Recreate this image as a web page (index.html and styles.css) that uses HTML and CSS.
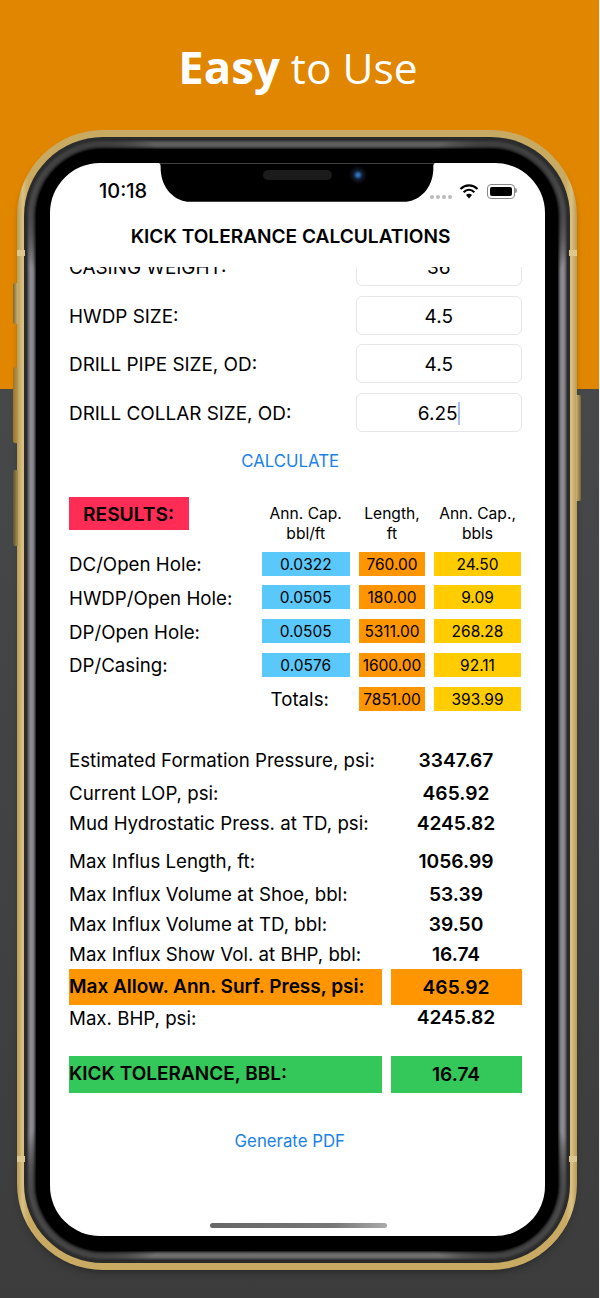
FILE: index.html
```html
<!DOCTYPE html>
<html lang="en">
<head>
<meta charset="UTF-8">
<meta name="viewport" content="width=device-width, initial-scale=1.0">
<title>Easy to Use</title>
<link rel="stylesheet" href="styles.css">
</head>
<body>

<h1 class="headline"><b>Easy</b> to Use</h1>

<div class="phone">
    <span class="side-btn btn-silent"></span>
    <span class="side-btn btn-up"></span>
    <span class="side-btn btn-down"></span>
    <span class="side-btn btn-power"></span>
    <span class="band-mark mark-tl"></span>
    <span class="band-mark mark-tr"></span>
    <span class="band-mark mark-bl"></span>
    <span class="band-mark mark-br"></span>
    <div class="ring-dark">
        <div class="ring-gray">
            <div class="bezel">
                <div class="screen">

                    <svg class="notch" width="278" height="39" viewBox="0 0 280 39">
                        <path d="M0 0H280C276 0 278 4 277 10C275 28 261 39 248 39H32C19 39 5 28 3 10C2 4 4 0 0 0Z" fill="#000"/>
                    </svg>
                    <span class="speaker"></span>
                    <span class="camera"></span>

                    <div class="status-bar">
                        <span class="time">10:18</span>
                        <div class="status-icons">
                            <span class="signal"><i></i><i></i><i></i><i></i></span>
                            <svg width="20" height="16" viewBox="0 0 20 16">
                                <path d="M1.5 6C6.5 1.2 13.5 1.2 18.5 6" fill="none" stroke="#000" stroke-width="2.2"/>
                                <path d="M4.6 9.2C7.8 6.2 12.2 6.2 15.4 9.2" fill="none" stroke="#000" stroke-width="2.2"/>
                                <path d="M7 12 10 15.4 13 12C11.2 10.4 8.8 10.4 7 12Z" fill="#000"/>
                            </svg>
                            <span class="battery"><i></i></span>
                        </div>
                    </div>

                    <div class="nav-title">KICK TOLERANCE CALCULATIONS</div>

                    <div class="scroll">
                        <div class="field-row first-row">
                            <label>CASING WEIGHT:</label>
                            <div class="field">36</div>
                        </div>
                        <div class="field-row">
                            <label>HWDP SIZE:</label>
                            <div class="field">4.5</div>
                        </div>
                        <div class="field-row">
                            <label>DRILL PIPE SIZE, OD:</label>
                            <div class="field">4.5</div>
                        </div>
                        <div class="field-row">
                            <label>DRILL COLLAR SIZE, OD:</label>
                            <div class="field"><span class="caret">6.25</span></div>
                        </div>

                        <div class="link calc-link">CALCULATE</div>

                        <div class="results">
                            <div class="results-tag">RESULTS:</div>
                            <div class="col-head">Ann. Cap.<br>bbl/ft</div>
                            <div class="col-head">Length,<br>ft</div>
                            <div class="col-head">Ann. Cap.,<br>bbls</div>

                            <div class="row-name">DC/Open Hole:</div>
                            <div class="cell blue">0.0322</div>
                            <div class="cell orange">760.00</div>
                            <div class="cell yellow">24.50</div>

                            <div class="row-name">HWDP/Open Hole:</div>
                            <div class="cell blue">0.0505</div>
                            <div class="cell orange">180.00</div>
                            <div class="cell yellow">9.09</div>

                            <div class="row-name">DP/Open Hole:</div>
                            <div class="cell blue">0.0505</div>
                            <div class="cell orange">5311.00</div>
                            <div class="cell yellow">268.28</div>

                            <div class="row-name">DP/Casing:</div>
                            <div class="cell blue">0.0576</div>
                            <div class="cell orange">1600.00</div>
                            <div class="cell yellow">92.11</div>

                            <div class="row-name"></div>
                            <div class="totals">Totals:</div>
                            <div class="cell orange">7851.00</div>
                            <div class="cell yellow">393.99</div>
                        </div>

                        <div class="summary">
                            <div class="line h34"><span>Estimated Formation Pressure, psi:</span><b>3347.67</b></div>
                            <div class="line h32"><span>Current LOP, psi:</span><b>465.92</b></div>
                            <div class="line h28"><span>Mud Hydrostatic Press. at TD, psi:</span><b>4245.82</b></div>
                            <div class="line h36 influs"><span>Max Influs Length, ft:</span><b>1056.99</b></div>
                            <div class="line h30"><span>Max Influx Volume at Shoe, bbl:</span><b>53.39</b></div>
                            <div class="line h30"><span>Max Influx Volume at TD, bbl:</span><b>39.50</b></div>
                            <div class="line h30"><span>Max Influx Show Vol. at BHP, bbl:</span><b>16.74</b></div>
                            <div class="line hilite amber"><span>Max Allow. Ann. Surf. Press, psi:</span><b>465.92</b></div>
                            <div class="line h28"><span>Max. BHP, psi:</span><b>4245.82</b></div>
                            <div class="line hilite green kick"><span>KICK TOLERANCE, BBL:</span><b>16.74</b></div>
                        </div>

                        <div class="link pdf-link">Generate PDF</div>
                    </div>

                    <span class="home-bar"></span>
                </div>
            </div>
        </div>
    </div>
</div>

</body>
</html>
```

FILE: styles.css
```css
* {
    box-sizing: border-box;
}

body {
    width: 600px;
    height: 1298px;
    margin: 0;
    overflow: hidden;
    border-right: 1.5px solid #f2f2f2;
    background: linear-gradient(#e08600 389px, #46484a 389px, #3c3c3c 1298px);
    font-family: Inter, 'Liberation Sans', sans-serif;
    color: #000;
}

.headline {
    height: 130px;
    margin: 0;
    padding: 36px 3px 0 0;
    text-align: center;
    font-family: 'Open Sans', 'Noto Sans', sans-serif;
    font-size: 42.5px;
    line-height: 60px;
    font-weight: 400;
    color: #fff;
}

.headline b {
    font-size: 45.5px;
    font-weight: 700;
}

/* phone frame */
.phone {
    position: relative;
    width: 560px;
    height: 1140px;
    margin-left: 17px;
    padding: 7px;
    border-radius: 86px;
    background: linear-gradient(90deg, #b89a55, #d9c184 1%, #c8aa62 2%, #c8aa62 98%, #d9c184 99%, #b89a55);
    box-shadow: 0 5px 9px -5px #1c1c1c;
}

.side-btn {
    position: absolute;
    width: 5px;
    background: linear-gradient(90deg, #7d6534, #cdb578);
    border-radius: 2px 0 0 2px;
}

.btn-silent { left: -4px; top: 153px; height: 41px; }
.btn-up     { left: -4px; top: 237px; height: 76px; background: linear-gradient(90deg, #9a7429, #b7984f); }
.btn-down   { left: -4px; top: 340px; height: 76px; background: linear-gradient(90deg, #5f5231, #a8914f); }
.btn-power  { right: -4px; top: 265px; height: 106px; background: linear-gradient(90deg, #cdb578, #7d6534); border-radius: 0 2px 2px 0; }

.band-mark {
    position: absolute;
    width: 8px;
    height: 6px;
    background: #dcc88e;
}

.mark-tl { left: 0; top: 120px; }
.mark-tr { right: 0; top: 120px; }
.mark-bl { left: 0; bottom: 108px; }
.mark-br { right: 0; bottom: 108px; }

.ring-dark {
    height: 100%;
    padding: 3px;
    border-radius: 79px;
    background: #2b2b2b;
}

/* corners of the metal band go dark, the straight parts stay light */
.ring-gray {
    height: 100%;
    padding: 9px;
    border-radius: 76px;
    background:
        radial-gradient(circle 88px at 76px 76px, #333 74%, transparent 100%),
        radial-gradient(circle 88px at calc(100% - 76px) 76px, #333 74%, transparent 100%),
        radial-gradient(circle 88px at 76px calc(100% - 76px), #333 74%, transparent 100%),
        radial-gradient(circle 88px at calc(100% - 76px) calc(100% - 76px), #333 74%, transparent 100%),
        linear-gradient(#5e5e5e, #8c8c92 8%, #8c8c92 92%, #6f6f6f);
    box-shadow: inset 0 0 3px 1px #222;
}

.bezel {
    height: 100%;
    padding: 14px 13px 15px 14px;
    border-radius: 67px;
    background: #000;
    box-shadow: 0 0 3px 1px #000;
}

.screen {
    position: relative;
    display: flex;
    flex-direction: column;
    height: 100%;
    overflow: hidden;
    border-radius: 50px;
    background: #fff;
}

.notch {
    position: absolute;
    left: 107.5px;
    top: 0;
}

.speaker {
    position: absolute;
    left: 213px;
    top: 7px;
    width: 69px;
    height: 10px;
    border-radius: 5px;
    background: #1b1b1b;
}

.camera {
    position: absolute;
    left: 299px;
    top: 3px;
    width: 18px;
    height: 18px;
    border-radius: 50%;
    background: radial-gradient(circle, #3f7fc8 0, #2a5e9e 16%, #10243c 32%, #0a0f18 50%, #000 75%);
}

/* status bar */
.status-bar {
    display: flex;
    justify-content: space-between;
    align-items: center;
    height: 28px;
    margin-top: 14px;
    padding: 0 30px 0 49px;
}

.time {
    font-size: 20px;
    font-weight: 500;
}

.status-icons {
    display: flex;
    align-items: center;
    gap: 8px;
}

.signal {
    display: flex;
    gap: 2px;
    margin-top: 11px;
    margin-right: -1px;
}

.signal i {
    width: 4px;
    height: 4px;
    border-radius: 50%;
    background: #bbb;
}

.battery {
    position: relative;
    width: 28px;
    height: 15px;
    padding: 2px;
    border: 1px solid #888;
    border-radius: 4px;
}

.battery i {
    display: block;
    height: 100%;
    border-radius: 2px;
    background: #000;
}

.battery::after {
    content: "";
    position: absolute;
    right: -3px;
    top: 3px;
    width: 2px;
    height: 5px;
    border-radius: 0 2px 2px 0;
    background: #999;
}

.nav-title {
    height: 60px;
    line-height: 60px;
    margin-top: 1px;
    margin-bottom: 1px;
    padding-right: 14px;
    text-align: center;
    font-size: 19.1px;
    font-weight: 600;
}

.scroll {
    flex: 1;
    overflow: hidden;
    padding: 0 23.5px 0 19px;
}

/* input rows */
.field-row {
    display: flex;
    justify-content: space-between;
    align-items: center;
    height: 39px;
    margin-bottom: 9.7px;
    font-size: 18.9px;
}

.field-row label {
    padding-top: 2px;
}

.first-row {
    margin-top: -20px;
}

.field {
    width: 165.5px;
    height: 39px;
    line-height: 39px;
    text-align: center;
    font-size: 19px;
    border: 1px solid #e6e6e6;
    border-radius: 6px;
    background: #fff;
}

.caret {
    border-right: 2px solid #a9bcf0;
}

.link {
    text-align: center;
    color: #1a82e6;
    font-size: 16.8px;
}

.calc-link {
    margin-top: 17px;
    line-height: 24px;
    padding-right: 10px;
}

/* results table */
.results {
    display: grid;
    grid-template-columns: 183.5px 88.5px 66px 87px;
    column-gap: 9px;
    grid-template-rows: 45px repeat(5, 24px);
    row-gap: 9.7px;
    margin-top: 24px;
    align-items: center;
}

.results-tag {
    justify-self: start;
    align-self: start;
    width: 120px;
    height: 33px;
    line-height: 35px;
    padding-left: 14.5px;
    background: #ff2d55;
    font-size: 19.2px;
    font-weight: 600;
    margin-left: -0.5px;
}

.col-head {
    align-self: start;
    margin-top: 7px;
    text-align: center;
    font-size: 15.6px;
    line-height: 19.5px;
}

.row-name {
    padding-top: 2px;
    font-size: 18.7px;
}

.totals {
    padding: 2px 12px 0 0;
    text-align: center;
    font-size: 18.7px;
}

.cell {
    height: 24px;
    line-height: 25px;
    text-align: center;
    font-size: 15.5px;
}

.blue { background: #5ac8fa; }
.orange { background: #ff9500; }
.yellow { background: #ffcc00; }

/* summary list */
.summary {
    margin-top: 32px;
    font-size: 18.7px;
}

.line {
    display: grid;
    grid-template-columns: 312.5px 131px;
    column-gap: 9px;
    align-items: center;
}

.line span {
    padding-top: 2px;
}

.line b {
    text-align: center;
    font-size: 19.2px;
    font-weight: 600;
}

.h28 { height: 28px; }
.h30 { height: 30px; }
.h32 { height: 32px; }
.h34 { height: 34px; }
.h36 { height: 36px; }

.influs {
    margin-top: 6px;
}

.hilite {
    height: 34.5px;
}

.hilite span,
.hilite b {
    display: block;
    height: 100%;
    padding-top: 0;
    line-height: 36.5px;
}

.hilite span {
    font-size: 19px;
    font-weight: 600;
}

.amber span,
.amber b {
    background: #ff9500;
}

.green span,
.green b {
    background: #34c759;
}

.kick {
    margin-top: 25px;
}

.pdf-link {
    margin-top: 38px;
    padding-right: 11px;
    line-height: 24px;
}

.home-bar {
    position: absolute;
    left: 160px;
    bottom: 8px;
    width: 177px;
    height: 5px;
    border-radius: 3px;
    background: linear-gradient(90deg, #666, #777 70%, #aaa);
}
```
